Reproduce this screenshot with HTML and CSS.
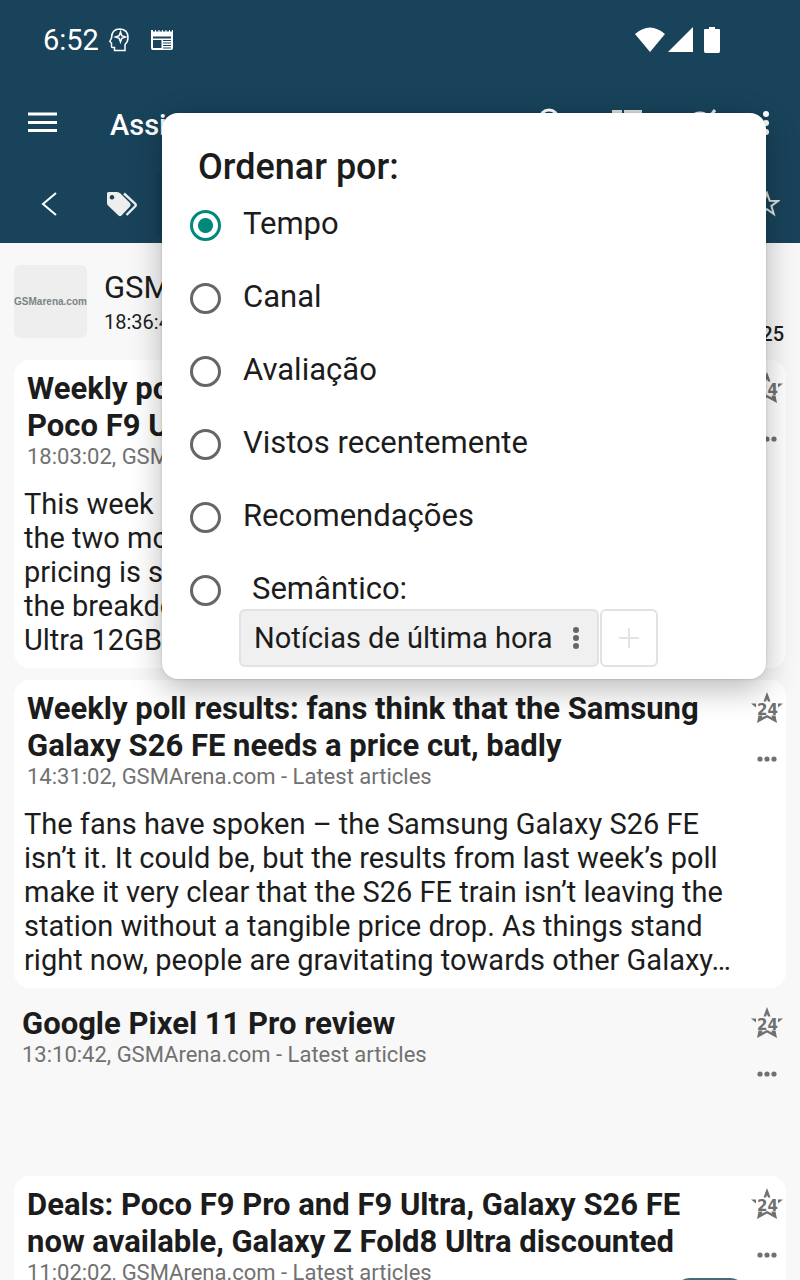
FILE: index.html
```html
<!DOCTYPE html>
<html lang="pt">
<head>
    <meta charset="UTF-8">
    <meta name="viewport" content="width=device-width, initial-scale=1.0">
    <title>Assinaturas</title>
    <link rel="stylesheet" href="styles.css">
</head>
<body>

<!-- Shared icons -->
<svg class="sprite" aria-hidden="true">
    <symbol id="star24" viewBox="0 0 32 32">
        <path d="M16 0 19.500 9.500H17L16 7 15 9.500H12.500ZM0 11.500H5V15.500ZM32 11.500H27V15.500ZM7.500 23.500H11.500L11 25.500 16 23 21 25.500 20.500 23.500H24.500L26 31 16 25.500 6 31Z"/>
        <text x="16.5" y="22.5" text-anchor="middle">24</text>
    </symbol>
    <symbol id="more" viewBox="0 0 20 6">
        <circle cx="3" cy="3" r="2.6"/><circle cx="10" cy="3" r="2.6"/><circle cx="17" cy="3" r="2.6"/>
    </symbol>
</svg>

<div class="app">
    <header>
        <div class="status-bar">
            <span class="clock">6:52</span>
            <svg class="status-icon head-icon" width="20" height="24" viewBox="0 0 20 24">
                <path d="M5.5 22.5V19.5H3.5Q2.5 19.5 2.5 18.5V15L.8 13.5 2.5 10Q2.5 1 11 1 19 1.5 19 9.5 19 14 16 16.5V22.5Z"/>
                <path d="M11.5 4 12.8 7.7 16.5 9 12.8 10.3 11.5 14 10.2 10.3 6.5 9 10.2 7.7Z"/>
            </svg>
            <svg class="status-icon" width="22" height="20" viewBox="0 0 22 20">
                <path class="solid" d="M0 0H2V1.5H4V0H5V1.5H7.5V0H8.5V1.5H11V0H12V1.5H14.5V0H15.5V1.5H18V0H19V1.5H21V0H22V18Q22 20 20 20H2Q0 20 0 18ZM2 6.5V8.5H20V6.5ZM2 10V18H10.500V10ZM12 10V11H20V10ZM12 12.500V13.500H20V12.500ZM12 15V16H20V15ZM12 17.500V18.500H20V17.500Z" fill-rule="evenodd"/>
            </svg>
            <svg class="signal" width="86" height="28" viewBox="0 0 86 28">
                <path d="M0 8Q15-5 30 8L15 26ZM33 26 58 1V26Z"/>
                <path d="M74 1H80V3H84Q85 3 85 4V25Q85 27 83.500 27H70.500Q69 27 69 25V4Q69 3 70 3H74Z"/>
            </svg>
        </div>

        <div class="toolbar">
            <button class="icon-btn menu-btn" aria-label="Menu">
                <svg width="30" height="22" viewBox="0 0 30 22"><path d="M0 2H29M0 10.500H29M0 18.500H29" stroke="#fff" stroke-width="3"/></svg>
            </button>
            <h1>Assinaturas</h1>
            <div class="actions">
                <button class="icon-btn" aria-label="Pesquisar">
                    <svg width="30" height="30" viewBox="0 0 30 30"><circle cx="12" cy="11" r="9" fill="none" stroke="#fff" stroke-width="3"/><path d="M18 18 27 27" stroke="#fff" stroke-width="3"/></svg>
                </button>
                <button class="icon-btn" aria-label="Lista">
                    <svg width="30" height="26" viewBox="0 0 30 26"><path d="M0 0H10V6H0ZM12 0H30V6H12ZM0 9H10V15H0ZM12 9H30V15H12ZM0 18H10V24H0ZM12 18H30V24H12Z" fill="#ddd"/></svg>
                </button>
                <button class="icon-btn" aria-label="Marcar como lido">
                    <svg width="30" height="30" viewBox="0 0 30 30"><circle cx="13" cy="17" r="12" fill="none" stroke="#eee" stroke-width="3"/><path d="M8 14 14 20 28 2" fill="none" stroke="#eee" stroke-width="3"/></svg>
                </button>
                <button class="icon-btn overflow-btn" aria-label="Mais">
                    <svg width="8" height="26" viewBox="0 0 8 26"><g fill="#fff"><circle cx="4" cy="4" r="3"/><circle cx="4" cy="13" r="3"/><circle cx="4" cy="22" r="3"/></g></svg>
                </button>
            </div>
        </div>

        <div class="tabs">
            <button class="icon-btn back-btn" aria-label="Voltar">
                <svg width="16" height="24" viewBox="0 0 16 24"><path d="M15 1 2 12 15 23" fill="none" stroke="#fff" stroke-width="2"/></svg>
            </button>
            <button class="icon-btn" aria-label="Etiquetas">
                <svg width="32" height="26" viewBox="0 0 32 26">
                    <path d="M2.500 1H11Q13 1 14.500 2.500L24 12Q25.500 14 24 15.500L15.500 24.500Q14 26 12.500 24.500L2 14.500Q1 13.500 1 12V2.500Q1 1 2.500 1ZM6 4A2.300 2.300 0 1 0 6.010 4Z" fill="#eee" fill-rule="evenodd"/>
                    <path d="M18 2.500 29 12.500Q30.500 14 29 15.500L20.500 24" fill="none" stroke="#eee" stroke-width="2.400"/>
                </svg>
            </button>
            <div class="tab-strip"></div>
            <button class="icon-btn fav-btn" aria-label="Favoritos">
                <svg width="26" height="26" viewBox="0 0 26 26"><path d="M13 2 15.700 9.800 24 10 17.400 15 19.800 23 13 18.300 6.200 23 8.600 15 2 10 10.300 9.800Z" fill="none" stroke="#ddd" stroke-width="2"/></svg>
            </button>
        </div>
    </header>

    <main>
        <div class="channel">
            <div class="channel-logo">GSMarena.com</div>
            <div class="channel-info">
                <h2>GSMArena.com</h2>
                <time>18:36:44</time>
            </div>
            <span class="channel-count">25</span>
        </div>

        <article class="card">
            <div class="card-text">
                <h3>Weekly poll: are you getting a<br>Poco F9 Ultra or a Poco F9 Pro?</h3>
                <p class="meta">18:03:02, GSMArena.com - Latest articles</p>
                <p class="summary">This week Poco unveiled the F9 series,<br>the two models are official and the<br>pricing is set for both of them, here is<br>the breakdown of what they cost<br>Ultra 12GB and the Pro 12GB versions…</p>
            </div>
            <div class="card-side">
                <button class="icon-btn" aria-label="Avaliar"><svg class="star"><use href="#star24"/></svg></button>
                <button class="icon-btn" aria-label="Mais opções"><svg class="more"><use href="#more"/></svg></button>
            </div>
        </article>

        <article class="card">
            <div class="card-text">
                <h3>Weekly poll results: fans think that the Samsung Galaxy S26 FE needs a price cut, badly</h3>
                <p class="meta">14:31:02, GSMArena.com - Latest articles</p>
                <p class="summary">The fans have spoken – the Samsung Galaxy S26 FE isn’t it. It could be, but the results from last week’s poll make it very clear that the S26 FE train isn’t leaving the station without a tangible price drop. As things stand right now, people are gravitating towards other Galaxy…</p>
            </div>
            <div class="card-side">
                <button class="icon-btn" aria-label="Avaliar"><svg class="star"><use href="#star24"/></svg></button>
                <button class="icon-btn" aria-label="Mais opções"><svg class="more"><use href="#more"/></svg></button>
            </div>
        </article>

        <article class="card card-read">
            <div class="card-text">
                <h3>Google Pixel 11 Pro review</h3>
                <p class="meta">13:10:42, GSMArena.com - Latest articles</p>
            </div>
            <div class="card-side">
                <button class="icon-btn" aria-label="Avaliar"><svg class="star"><use href="#star24"/></svg></button>
                <button class="icon-btn" aria-label="Mais opções"><svg class="more"><use href="#more"/></svg></button>
            </div>
        </article>

        <article class="card">
            <div class="card-text">
                <h3>Deals: Poco F9 Pro and F9 Ultra, Galaxy S26 FE now available, Galaxy Z Fold8 Ultra discounted</h3>
                <p class="meta">11:02:02, GSMArena.com - Latest articles</p>
            </div>
            <div class="card-side">
                <button class="icon-btn" aria-label="Avaliar"><svg class="star"><use href="#star24"/></svg></button>
                <button class="icon-btn" aria-label="Mais opções"><svg class="more"><use href="#more"/></svg></button>
            </div>
        </article>
    </main>

    <button class="fab" aria-label="Próximo"></button>

    <!-- Sort menu -->
    <form class="dialog" role="dialog" aria-labelledby="sort-title">
        <h2 id="sort-title">Ordenar por:</h2>
        <label class="option"><input type="radio" name="sort" checked><span>Tempo</span></label>
        <label class="option"><input type="radio" name="sort"><span>Canal</span></label>
        <label class="option"><input type="radio" name="sort"><span>Avaliação</span></label>
        <label class="option"><input type="radio" name="sort"><span>Vistos recentemente</span></label>
        <label class="option"><input type="radio" name="sort"><span>Recomendações</span></label>
        <label class="option option-semantic"><input type="radio" name="sort"><span>Semântico:</span></label>
        <div class="chips">
            <button type="button" class="chip">
                Notícias de última hora
                <svg width="6" height="22" viewBox="0 0 6 22"><g fill="#666"><circle cx="3" cy="3" r="3"/><circle cx="3" cy="11" r="3"/><circle cx="3" cy="19" r="3"/></g></svg>
            </button>
            <button type="button" class="chip chip-add" aria-label="Adicionar">
                <svg width="22" height="22" viewBox="0 0 22 22"><path d="M11 1V21M1 11H21" stroke="#e4e4e4" stroke-width="2"/></svg>
            </button>
        </div>
    </form>
</div>

</body>
</html>
```
FILE: styles.css
```css
* {
    box-sizing: border-box;
}

body {
    margin: 0;
    font-family: Roboto, "Liberation Sans", sans-serif;
    background-color: #f8f8f8;
    color: #1c1c1c;
}

h1, h2, h3, p {
    margin: 0;
}

button {
    font: inherit;
    color: inherit;
}

svg {
    display: block;
}

.sprite {
    position: absolute;
    width: 0;
    height: 0;
}

.app {
    position: relative;
    height: 100vh;
    display: flex;
    flex-direction: column;
    overflow: hidden;
}

.icon-btn {
    display: flex;
    padding: 0;
    border: 0;
    background: none;
}

/* Header */
header {
    flex: none;
    background-color: #18435a;
    color: #fff;
}

.status-bar {
    display: flex;
    align-items: center;
    height: 80px;
    padding: 0 79px 0 43px;
}

.clock {
    font-size: 29px;
    margin-right: 10px;
}

.status-icon {
    margin-right: 22px;
    fill: none;
    stroke: #fff;
    stroke-width: 1.5;
}

.status-icon .solid {
    fill: #fff;
    stroke: none;
}

.signal {
    margin-left: auto;
    fill: #fff;
}

.toolbar {
    display: flex;
    align-items: center;
    height: 84px;
    padding: 2px 30px 0 28px;
}

.toolbar h1 {
    margin-left: 52px;
    padding-top: 3px;
    font-size: 29px;
    font-weight: 500;
    line-height: 40px;
}

.actions {
    display: flex;
    align-items: center;
    gap: 45px;
    margin-left: auto;
}

.tabs {
    display: flex;
    align-items: center;
    height: 79px;
    padding: 0 20px 0 41px;
}

.back-btn {
    margin-right: 49px;
}

.tab-strip {
    flex: 1;
    height: 66px;
    margin: 0 8px 0 17px;
    border-radius: 8px;
    background-color: #164058;
}

/* Article list */
main {
    flex: 1;
    min-height: 0;
    overflow: hidden;
    padding: 0 14px;
}

.channel {
    display: flex;
    height: 117px;
    padding: 22px 2px 0 0;
}

.channel-logo {
    width: 73px;
    height: 73px;
    border-radius: 6px;
    background-color: #eee;
    color: #7c8484;
    font: bold 11px/73px "Liberation Sans", sans-serif;
    font-size: 10px;
    text-align: center;
}

.channel-info {
    margin-left: 17px;
}

.channel-info h2 {
    font-size: 31px;
    font-weight: 400;
    line-height: 46px;
}

.channel-info time {
    display: block;
    font-size: 20px;
    line-height: 22px;
}

.channel-count {
    margin-left: auto;
    padding-top: 57px;
    font-size: 20px;
    font-weight: 500;
    line-height: 24px;
}

.card {
    display: flex;
    gap: 12px;
    margin-bottom: 12px;
    padding: 10px 3px 11px 10px;
    border-radius: 16px;
    background-color: #fff;
}

.card-text {
    flex: 1;
}

.card h3 {
    padding-left: 3px;
    font-size: 31px;
    font-weight: 700;
    line-height: 37px;
}

.meta {
    padding-left: 3px;
    font-size: 22px;
    line-height: 26px;
    color: #717171;
}

.summary {
    margin-top: 17px;
    font-size: 29px;
    line-height: 34px;
}

.card-side {
    display: flex;
    flex-direction: column;
    align-items: center;
    gap: 32px;
    padding-top: 2px;
}

.star {
    width: 32px;
    height: 32px;
    fill: #707070;
    font: bold 15px "DejaVu Sans", sans-serif;
}

.more {
    width: 20px;
    height: 6px;
    fill: #707070;
}

.card-read {
    min-height: 168px;
    margin-bottom: 8px;
    padding-top: 5px;
    padding-left: 5px;
    background: none;
}

/* Floating button */
.fab {
    position: absolute;
    right: 54px;
    bottom: -70px;
    width: 72px;
    height: 72px;
    border: 0;
    border-radius: 16px;
    background-color: #466a7a;
}

/* Sort menu */
.dialog {
    position: absolute;
    top: 113px;
    left: 162px;
    right: 34px;
    padding: 33px 28px 12px;
    border-radius: 16px;
    background-color: #fff;
    box-shadow: 0 10px 32px rgba(0, 0, 0, 0.28), 0 0 3px rgba(0, 0, 0, 0.15);
}

.dialog h2 {
    margin-bottom: 12px;
    padding-left: 8px;
    font-size: 36px;
    font-weight: 500;
    line-height: 43px;
}

.option {
    display: flex;
    align-items: center;
    gap: 22px;
    height: 49px;
    margin-bottom: 24px;
    font-size: 31px;
}

.option span {
    padding-bottom: 4px;
}

.option input {
    appearance: none;
    width: 31px;
    height: 31px;
    margin: 0;
    border: 3px solid #666;
    border-radius: 50%;
}

.option input:checked {
    border-color: #00897b;
    background: radial-gradient(circle, #00897b 7px, transparent 8px);
}

.option-semantic {
    gap: 31px;
    margin-bottom: -6px;
}

.chips {
    display: flex;
    gap: 1px;
    padding-left: 49px;
}

.chip {
    display: flex;
    align-items: center;
    gap: 20px;
    height: 58px;
    padding: 0 18px 0 13px;
    border: 2px solid #e2e2e2;
    border-radius: 6px;
    background-color: #f0f0f0;
    font-size: 29px;
}

.chip-add {
    padding: 0 16px;
    background-color: #fff;
}
```
